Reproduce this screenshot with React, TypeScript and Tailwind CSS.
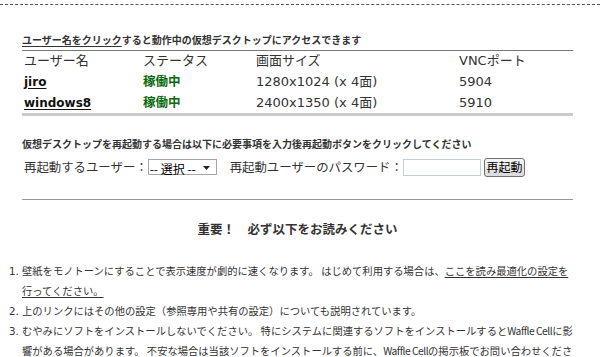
export default function App() {
  const cell = "pl-[2px] h-[20px] p-0 text-left align-middle font-normal";
  const wc = "tracking-[-0.5px]";
  return (
    <div className="w-[600px] h-[357px] overflow-hidden bg-white text-[#333] font-['DejaVu_Sans','Noto_Sans_CJK_JP',sans-serif]">
      <div className="pt-[4px]">
        <div className="border-t border-dashed border-[#555]" />
      </div>
      <div className="ml-[22px] w-[551px]">
        <div className="mt-[27px] pb-[2px] border-b border-[#777] text-[10px] leading-[16px] font-bold font-['Noto_Sans_CJK_JP',sans-serif]">
          <span className="underline underline-offset-2">ユーザー名をクリック</span>すると動作中の仮想デスクトップにアクセスできます
        </div>
        <div className="border-b-[3px] border-[#cbcbcb]">
          <table className="w-full border-collapse text-[13px] leading-[20px]">
            <thead>
              <tr>
                <th className={cell + " w-[119px]"}>ユーザー名</th>
                <th className={cell + " w-[113px]"}>ステータス</th>
                <th className={cell + " w-[203px]"}>画面サイズ</th>
                <th className={cell}>VNCポート</th>
              </tr>
            </thead>
            <tbody>
              {[
                ["jiro", "1280x1024 (x 4面)", "5904"],
                ["windows8", "2400x1350 (x 4面)", "5910"],
              ].map(([name, size, port]) => (
                <tr key={name}>
                  <td className={cell}>
                    <a href="#" className="font-bold text-[12px] text-[#111] underline underline-offset-2 font-['DejaVu_Sans',sans-serif]">
                      {name}
                    </a>
                  </td>
                  <td className={cell}>
                    <span className="font-bold text-[#0a690a] font-['Noto_Sans_CJK_JP',sans-serif] text-[12.5px]">稼働中</span>
                  </td>
                  <td className={cell}>{size}</td>
                  <td className={cell}>{port}</td>
                </tr>
              ))}
            </tbody>
          </table>
        </div>
        <div className="mt-[20px] text-[10px] leading-[16px] font-bold font-['Noto_Sans_CJK_JP',sans-serif]">
          仮想デスクトップを再起動する場合は以下に必要事項を入力後再起動ボタンをクリックしてください
        </div>
        <div className="mt-[5px] h-[20px] flex items-center pl-[2px] text-[12.4px] font-['Noto_Sans_CJK_JP',sans-serif]">
          <span>再起動するユーザー：</span>
          <div className="relative w-[69px] h-[16px] border border-[#a6a6a6] bg-white">
            <select className="appearance-none w-full h-full bg-transparent pl-[1px] text-[12px] leading-[14px] text-black outline-none">
              <option>-- 選択 --</option>
              <option>jiro</option>
              <option>windows8</option>
            </select>
            <svg className="absolute right-[6px] top-[6px] pointer-events-none" width="7" height="4" viewBox="0 0 7 4">
              <path d="M0 0H7L3.5 4Z" fill="#222" />
            </svg>
          </div>
          <span className="ml-[13px]">再起動ユーザーのパスワード：</span>
          <input type="password" className="w-[78px] h-[17px] border border-[#c5cdd6] bg-white outline-none" />
          <button className="ml-[3px] w-[41px] h-[19px] border border-[#707070] rounded-[3px] bg-gradient-to-b from-[#f7f7f7] to-[#dadada] text-[12px] leading-none text-black">
            再起動
          </button>
        </div>
        <div className="mt-[22px] border-t border-[#999]" />
        <div className="mt-[19px] text-center text-[12.5px] leading-[20px] font-bold font-['Noto_Sans_CJK_JP',sans-serif]">
          重要！　必ず以下をお読みください
        </div>
        <ol className="mt-[22px] list-decimal list-outside text-[10.3px] leading-[20px] font-['Noto_Sans_CJK_JP',sans-serif] marker:font-['DejaVu_Sans']">
          <li>
            壁紙をモノトーンにすることで表示速度が劇的に速くなります。 はじめて利用する場合は、
            <a href="#" className="underline underline-offset-2 text-[#333]">ここを読み最適化の設定を行ってください。</a>
          </li>
          <li>上のリンクにはその他の設定（参照専用や共有の設定）についても説明されています。</li>
          <li>
            むやみにソフトをインストールしないでください。 特にシステムに関連するソフトをインストールすると<span className={wc}>Waffle Cell</span>に影響がある場合があります。 不安な場合は当該ソフトをインストールする前に、<span className={wc}>Waffle Cell</span>の掲示板でお問い合わせください。
          </li>
        </ol>
      </div>
    </div>
  );
}
